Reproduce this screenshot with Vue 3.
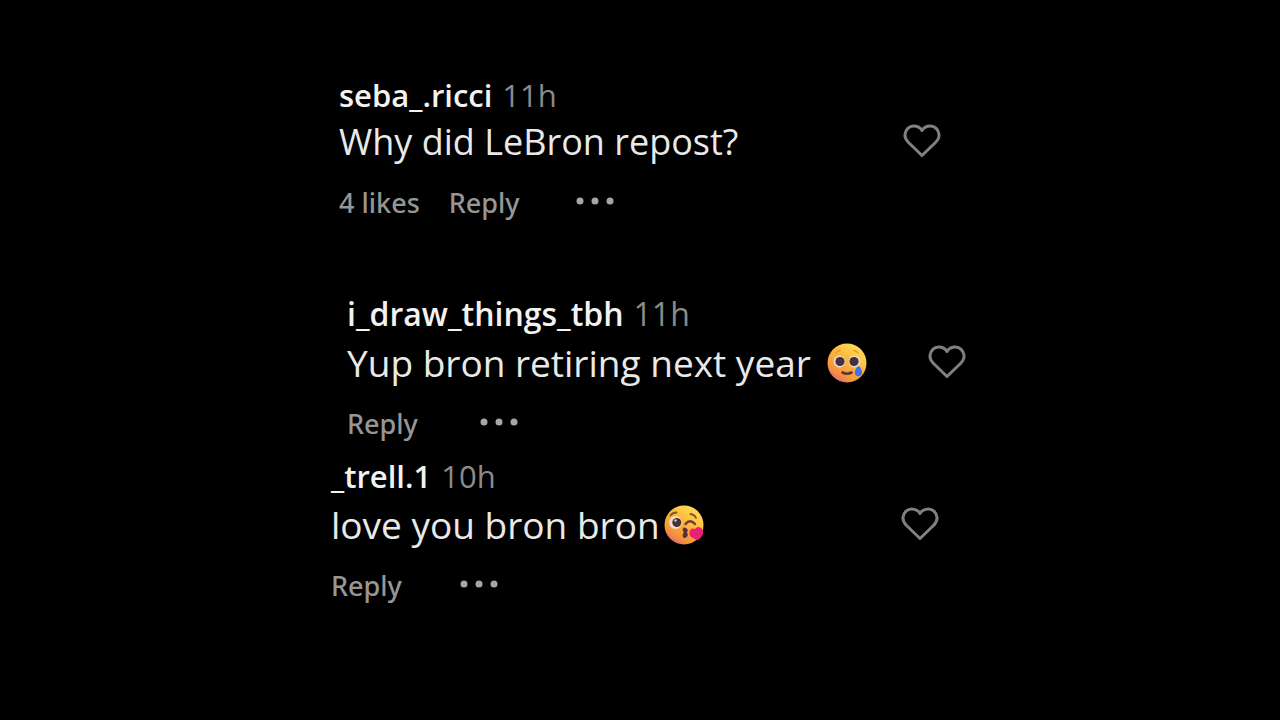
<script setup>
const comments = [
  { id: 1, user: 'seba_.ricci', age: '11h', text: 'Why did LeBron repost?', likes: '4 likes', place: 'first' },
  { id: 2, user: 'i_draw_things_tbh', age: '11h', text: 'Yup bron retiring next year', emoji: 'tear', place: 'second' },
  { id: 3, user: '_trell.1', age: '10h', text: 'love you bron bron', emoji: 'kiss', place: 'third' },
]
</script>

<template>
  <main class="page">
    <section class="thread" aria-label="Comments">
      <article v-for="c in comments" :key="c.id" class="comment" :class="c.place">
        <header class="meta">
          <a href="#" class="user">{{ c.user }}</a>
          <time class="age">{{ c.age }}</time>
        </header>
        <div class="body">
          <p class="text">{{ c.text }}</p>
          <svg v-if="c.emoji" class="emoji" viewBox="0 0 40 40" role="img" :aria-label="c.emoji">
            <defs>
              <linearGradient :id="'face' + c.id" x1="0.85" y1="0.1" x2="0.25" y2="1">
                <stop offset="0" stop-color="#ffdc58" />
                <stop offset="0.45" stop-color="#fcb53a" />
                <stop offset="0.8" stop-color="#f5923c" />
                <stop offset="1" stop-color="#dd6488" />
              </linearGradient>
            </defs>
            <circle cx="20" cy="20" r="19.5" :fill="`url(#face${c.id})`" />
            <g v-if="c.emoji === 'tear'">
              <circle cx="12.5" cy="18.5" r="6" fill="#eadccb" />
              <circle cx="27.5" cy="18.5" r="6" fill="#eadccb" />
              <circle cx="13" cy="18.5" r="4.6" fill="#493039" />
              <circle cx="27" cy="18.5" r="4.6" fill="#493039" />
              <path d="M9 10 Q10 8 13 7.5 M27 7.5 Q30 8 31 10" fill="none" stroke="#e09a34" stroke-width="1.4" stroke-linecap="round" />
              <path d="M15.5 29.500 Q20 32 24.500 29.500" fill="none" stroke="#5d3435" stroke-width="2.6" stroke-linecap="round" />
              <path d="M31.5 23 C33.5 24.500 35 26.500 35 29.500 A3.6 3.8 0 0 1 27.8 29.500 C27.8 26.500 29.500 24.500 31.500 23Z" fill="#3f70ee" />
            </g>
            <g v-else>
              <circle cx="11.500" cy="17.500" r="6.300" fill="#f0e2d6" />
              <circle cx="12.800" cy="17.500" r="4.500" fill="#493039" />
              <circle cx="11.500" cy="15.500" r="1.200" fill="#ddd3d3" />
              <path d="M6.500 10.500 Q8.500 7.500 12.500 7.500" fill="none" stroke="#8a5228" stroke-width="1.800" stroke-linecap="round" />
              <path d="M26.500 9 Q30.500 9.500 32 13" fill="none" stroke="#8a5228" stroke-width="1.800" stroke-linecap="round" />
              <path d="M21.500 19 Q26 13.500 31 19" fill="none" stroke="#6d3d2c" stroke-width="2.400" stroke-linecap="round" />
              <path d="M19.500 22.500 C24.500 22.500 24.500 27 22.500 27.500 C25 28.500 24 33.500 19.500 33 L18.500 30.500 L19.700 27.500 L18.500 24.500 Z" fill="#563039" />
              <path d="M33 35.500 L26.500 31.500 C23.800 27 26.500 21.800 31 24 C34 19.500 40 23 39 28.500 C38.500 31.500 36 33.500 33 35.500Z" fill="#ea2077" />
            </g>
          </svg>
          <button class="like" type="button" aria-label="Like">
            <svg viewBox="0 0 38 34">
              <path d="M19 31.500 L5.500 18.500 C2.500 15.500 1.800 12.500 2 10.500 C2.500 5.500 6.200 2 10.500 2 C14.500 2 17.500 3.800 19 6.500 C20.500 3.800 23.500 2 27.500 2 C31.800 2 35.500 5.500 36 10.500 C36.200 12.500 35.500 15.500 32.500 18.500 Z" />
            </svg>
          </button>
        </div>
        <footer class="actions">
          <span v-if="c.likes" class="likes">{{ c.likes }}</span>
          <button class="reply" type="button">Reply</button>
          <button class="more" type="button" aria-label="More options">
            <svg viewBox="0 0 38 8">
              <circle cx="4" cy="4" r="3.500" />
              <circle cx="19" cy="4" r="3.500" />
              <circle cx="34" cy="4" r="3.500" />
            </svg>
          </button>
        </footer>
      </article>
    </section>
  </main>
</template>

<style>
body {
  background: #000;
}
</style>

<style scoped>
.page {
  box-sizing: border-box;
  min-height: 100vh;
  padding-top: 73px;
  background: #000;
  color: #e9e9e9;
  font-family: "Open Sans", "Noto Sans", sans-serif;
}
.thread {
  max-width: 660px;
  margin: 0 auto;
}
.first {
  padding: 0 29px 69px;
}
.second {
  padding: 0 4px 10px 37px;
}
.third {
  padding: 0 31px 0 21px;
}
.meta {
  display: flex;
  gap: 10px;
  font-size: 31px;
  line-height: 48px;
}
.first .meta {
  line-height: 44px;
}
.second .meta {
  font-size: 32px;
}
.user {
  color: #f2f2f2;
  font-weight: 600;
  text-decoration: none;
}
.age {
  color: #8a8a8a;
  font-weight: 400;
}
.body {
  display: flex;
  align-items: center;
}
.text {
  margin: 0;
  font-size: 37px;
  line-height: 50px;
}
.first .text {
  font-size: 36px;
}
.emoji {
  width: 40px;
  height: 40px;
  margin-left: 4px;
}
.second .emoji {
  margin-left: 16px;
}
button {
  padding: 0;
  border: 0;
  background: none;
  color: inherit;
  font: inherit;
  cursor: pointer;
}
.like {
  display: flex;
  margin-left: auto;
  padding-bottom: 2px;
}
.like svg {
  width: 38px;
  height: 34px;
  fill: none;
  stroke: #808080;
  stroke-width: 3;
  stroke-linejoin: round;
}
.actions {
  display: flex;
  align-items: center;
  margin-top: 18px;
  color: #969696;
  font-family: "Noto Sans", "Open Sans", sans-serif;
  font-size: 27px;
  font-weight: 500;
  line-height: 36px;
}
.likes {
  margin-right: 29px;
}
.more {
  display: flex;
  margin: 0 0 4px 58px;
}
.first .more {
  margin-left: 56px;
}
.second .more {
  margin-left: 62px;
}
.more svg {
  width: 38px;
  height: 8px;
  fill: #a6a6a6;
}
</style>
